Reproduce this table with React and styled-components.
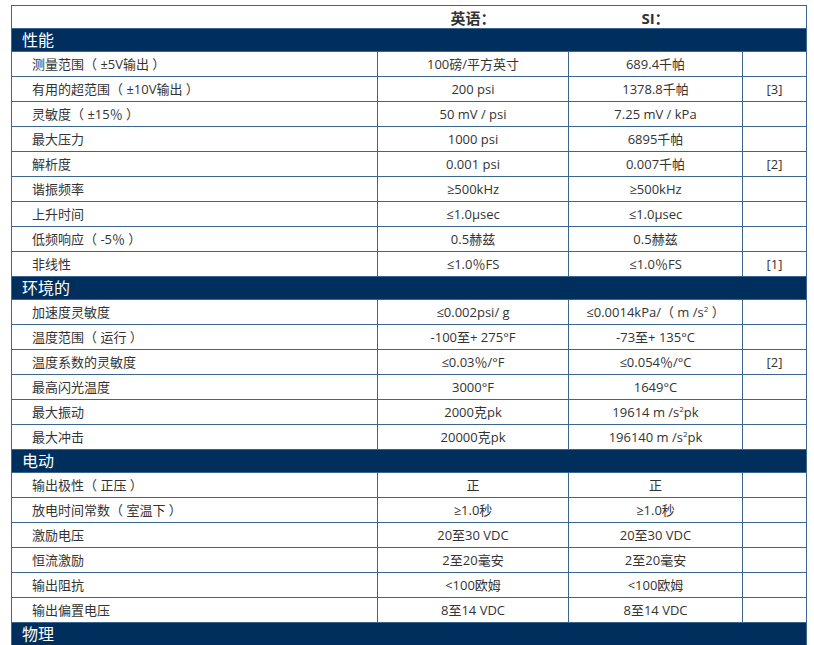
import React from 'react'
import styled, { createGlobalStyle } from 'styled-components'

const GlobalStyle = createGlobalStyle`
    html, body {
        margin: 0;
        padding: 0;
        background: #ffffff;
        overflow: hidden;
    }
    body {
        font-family: "Open Sans", "Noto Sans CJK SC", sans-serif;
        color: #333333;
    }
`

const Page = styled.div`
    padding: 5px 0 0 11px;
`

const Table = styled.table`
    width: 795px;
    border-collapse: collapse;
    table-layout: fixed;
    border: 1px solid #3b6690;
    font-size: 13px;
`

const HeadCell = styled.th`
    height: 22px;
    padding: 0;
    font-size: 15px;
    font-weight: 700;
    text-align: center;
    vertical-align: middle;
    color: #333333;
`

const SectionCell = styled.td`
    height: 22px;
    padding: 0 0 0 10px;
    background: #002f5e;
    color: #ffffff;
    font-size: 16px;
    line-height: 22px;
    border: 1px solid #3b6690;
`

const Cell = styled.td`
    height: 24px;
    padding: ${({ label }) => (label ? '0 0 0 20px' : '0')};
    text-align: ${({ label }) => (label ? 'left' : 'center')};
    border: 1px solid #3b6690;
    white-space: nowrap;
    line-height: 24px;
`

const Sup = styled.sup`
    font-size: 8px;
    vertical-align: 5px;
    line-height: 0;
`

const s2 = <>m /s<Sup>2</Sup></>

const sections = [
    {
        title: '性能',
        rows: [
            ['测量范围（ ±5V输出 ）', '100磅/平方英寸', '689.4千帕', ''],
            ['有用的超范围（ ±10V输出 ）', '200 psi', '1378.8千帕', '[3]'],
            ['灵敏度（ ±15％ ）', '50 mV / psi', '7.25 mV / kPa', ''],
            ['最大压力', '1000 psi', '6895千帕', ''],
            ['解析度', '0.001 psi', '0.007千帕', '[2]'],
            ['谐振频率', '≥500kHz', '≥500kHz', ''],
            ['上升时间', '≤1.0μsec', '≤1.0μsec', ''],
            ['低频响应（ -5％ ）', '0.5赫兹', '0.5赫兹', ''],
            ['非线性', '≤1.0％FS', '≤1.0％FS', '[1]'],
        ],
    },
    {
        title: '环境的',
        rows: [
            ['加速度灵敏度', '≤0.002psi/ g', <>≤0.0014kPa/（ {s2} ）</>, ''],
            ['温度范围（ 运行 ）', '-100至+ 275°F', '-73至+ 135°C', ''],
            ['温度系数的灵敏度', '≤0.03％/°F', '≤0.054％/°C', '[2]'],
            ['最高闪光温度', '3000°F', '1649°C', ''],
            ['最大振动', '2000克pk', <>19614 {s2}pk</>, ''],
            ['最大冲击', '20000克pk', <>196140 {s2}pk</>, ''],
        ],
    },
    {
        title: '电动',
        rows: [
            ['输出极性（ 正压 ）', '正', '正', ''],
            ['放电时间常数（ 室温下 ）', '≥1.0秒', '≥1.0秒', ''],
            ['激励电压', '20至30 VDC', '20至30 VDC', ''],
            ['恒流激励', '2至20毫安', '2至20毫安', ''],
            ['输出阻抗', '<100欧姆', '<100欧姆', ''],
            ['输出偏置电压', '8至14 VDC', '8至14 VDC', ''],
        ],
    },
    {
        title: '物理',
        rows: [],
    },
]

const App = () => {
    return (
        <Page>
            <GlobalStyle />
            <Table>
                <colgroup>
                    <col style={{ width: '366px' }} />
                    <col style={{ width: '191px' }} />
                    <col style={{ width: '174px' }} />
                    <col style={{ width: '64px' }} />
                </colgroup>
                <thead>
                    <tr>
                        <HeadCell />
                        <HeadCell>英语：</HeadCell>
                        <HeadCell>SI：</HeadCell>
                        <HeadCell />
                    </tr>
                </thead>
                {sections.map((section) => (
                    <tbody key={section.title}>
                        <tr>
                            <SectionCell colSpan={4}>{section.title}</SectionCell>
                        </tr>
                        {section.rows.map((row, i) => (
                            <tr key={i}>
                                <Cell label>{row[0]}</Cell>
                                <Cell>{row[1]}</Cell>
                                <Cell>{row[2]}</Cell>
                                <Cell>{row[3]}</Cell>
                            </tr>
                        ))}
                    </tbody>
                ))}
            </Table>
        </Page>
    )
}

export default App
